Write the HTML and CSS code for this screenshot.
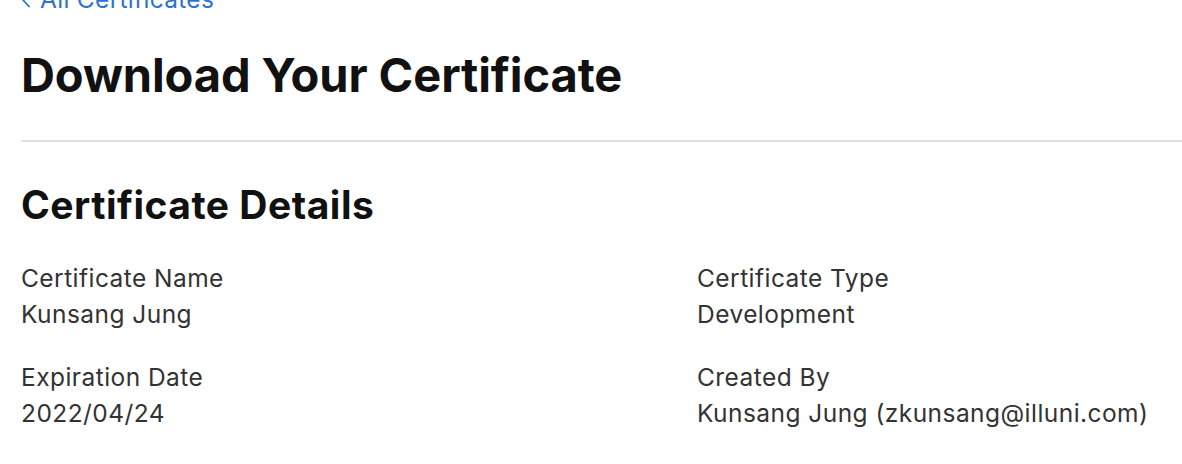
FILE: index.html
```html
<!DOCTYPE html>
<html>
<head>
<meta charset="utf-8">
<link rel="stylesheet" href="styles.css">
</head>
<body>
<main class="page">
  <a class="back" href="#"><svg class="chev" width="10" height="16" viewBox="0 0 10 16" aria-hidden="true"><path d="M8 1.5 L2 8 L8 14.5" fill="none" stroke="currentColor" stroke-width="1.8" stroke-linecap="round" stroke-linejoin="round"/></svg><span>All Certificates</span></a>
  <h1 class="title">Download Your Certificate</h1>
  <hr class="rule">
  <h2 class="section">Certificate Details</h2>
  <div class="details">
    <div class="field">
      <div class="label">Certificate Name</div>
      <div class="value">Kunsang Jung</div>
    </div>
    <div class="field">
      <div class="label">Certificate Type</div>
      <div class="value">Development</div>
    </div>
    <div class="field">
      <div class="label">Expiration Date</div>
      <div class="value">2022/04/24</div>
    </div>
    <div class="field">
      <div class="label">Created By</div>
      <div class="value">Kunsang Jung (zkunsang@illuni.com)</div>
    </div>
  </div>
</main>
</body>
</html>
```

FILE: styles.css
```css
html, body {
  margin: 0;
  padding: 0;
  background: #ffffff;
}
body {
  font-family: Inter, "Noto Sans", sans-serif;
  color: #333333;
  overflow: hidden;
}
.page {
  padding-left: 21px;
}
.back {
  display: flex;
  align-items: center;
  gap: 9px;
  margin-top: -19px;
  color: #2e73d2;
  text-decoration: none;
  font-size: 24.5px;
  line-height: 36px;
  letter-spacing: 0.3px;
}
.chev {
  flex: none;
  margin-top: 1px;
}
.title {
  margin: 30px 0 0;
  font-size: 47px;
  font-weight: 700;
  line-height: 56px;
  color: #111111;
  letter-spacing: -0.1px;
}
.rule {
  border: none;
  border-top: 2px solid #e0e0e0;
  margin: 37px 0 0;
}
.section {
  margin: 39px 0 0;
  font-size: 39px;
  font-weight: 700;
  line-height: 48px;
  color: #111111;
  letter-spacing: 0.5px;
}
.details {
  display: grid;
  grid-template-columns: 676px 1fr;
  row-gap: 27px;
  margin-top: 31px;
}
.label, .value {
  font-size: 24.5px;
  line-height: 36px;
  letter-spacing: 0.45px;
  color: #333333;
}
```
